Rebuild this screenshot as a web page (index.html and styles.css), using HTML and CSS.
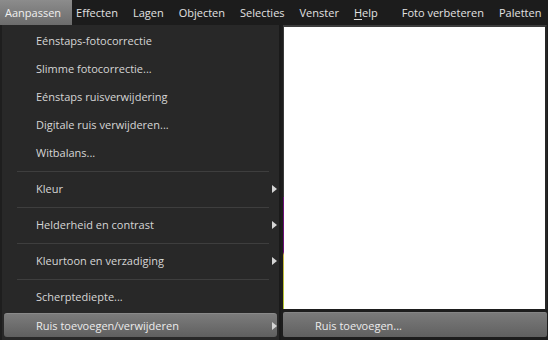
FILE: index.html
```html
<!DOCTYPE html>
<html>
<head>
<meta charset="utf-8">
<link rel="stylesheet" href="styles.css">
</head>
<body>
<div class="app">
  <nav class="menubar">
    <span class="mi active">Aanpassen</span>
    <span class="mi">Effecten</span>
    <span class="mi">Lagen</span>
    <span class="mi">Objecten</span>
    <span class="mi">Selecties</span>
    <span class="mi">Venster</span>
    <span class="mi"><u>H</u>elp</span>
    <span class="vsep"></span>
    <span class="mi">Foto verbeteren</span>
    <span class="mi">Paletten</span>
  </nav>
  <div class="body">
    <div class="dropdown">
      <div class="item">Eénstaps-fotocorrectie</div>
      <div class="item">Slimme fotocorrectie...</div>
      <div class="item">Eénstaps ruisverwijdering</div>
      <div class="item">Digitale ruis verwijderen...</div>
      <div class="item">Witbalans...</div>
      <div class="sep"></div>
      <div class="item sub">Kleur<span class="arrow"></span></div>
      <div class="sep"></div>
      <div class="item sub">Helderheid en contrast<span class="arrow"></span></div>
      <div class="sep"></div>
      <div class="item sub">Kleurtoon en verzadiging<span class="arrow"></span></div>
      <div class="sep"></div>
      <div class="item">Scherptediepte...</div>
      <div class="item sub hl"><span class="hlbox">Ruis toevoegen/verwijderen<span class="arrow"></span></span></div>
    </div>
    <div class="right">
      <div class="canvas"></div>
      <div class="submenu"><span class="subhl">Ruis toevoegen...</span></div>
    </div>
  </div>
</div>
</body>
</html>
```

FILE: styles.css
```css
html, body {
  margin: 0;
  padding: 0;
  background: #1b1b1b;
}
.app {
  width: 548px;
  height: 340px;
  overflow: hidden;
  font-family: "Open Sans", "Noto Sans", sans-serif;
  font-size: 11px;
  color: #dcdcdc;
}
.menubar {
  display: flex;
  align-items: center;
  height: 25px;
  background: #1c1c1c;
}
.mi {
  height: 25px;
  line-height: 25px;
  padding: 0 7.5px;
  color: #e2e2e2;
  white-space: nowrap;
}
.mi u {
  text-decoration: underline;
  text-underline-offset: 2px;
}
.mi.active {
  padding: 0 11px 0 5px;
  margin-right: -3.5px;
  background: linear-gradient(#8c8c8c, #6c6c6c);
  color: #f0f0f0;
  position: relative;
  z-index: 1;
}
.vsep {
  width: 1px;
  height: 17px;
  background: #454545;
  margin: 0 1.5px 0 7.5px;
}
.body {
  display: flex;
  height: 315px;
}
.dropdown {
  width: 277px;
  background: #282828;
  border-left: 2px solid #1e1e1e;
  border-right: 2px solid #1a1a1a;
  padding-top: 2px;
  box-sizing: content-box;
}
.item {
  position: relative;
  height: 28px;
  line-height: 28px;
  padding-left: 34px;
  color: #d6d6d6;
  white-space: nowrap;
}
.arrow {
  position: absolute;
  left: 270px;
  top: 10px;
  width: 0;
  height: 0;
  border-top: 4px solid transparent;
  border-bottom: 4px solid transparent;
  border-left: 5px solid #d4d4d4;
}
.sep {
  height: 1px;
  margin: 4px 10px 3px 15px;
  background: #3e3e3e;
}
.item.hl {
  padding: 2px 0 0 2px;
  height: 26px;
}
.hlbox {
  display: block;
  position: relative;
  height: 24px;
  width: 273px;
  line-height: 24px;
  padding-left: 32px;
  box-sizing: border-box;
  border-radius: 3px;
  border-top: 1px solid #8a8a8a;
  background: linear-gradient(#7c7c7c, #5f5f5f);
  color: #ececec;
}
.hlbox .arrow {
  left: 268px;
  top: 8px;
}
.right {
  flex: 1;
  display: flex;
  flex-direction: column;
  background: #1d1d1d;
  padding-left: 2px;
}
.canvas {
  height: 282px;
  margin-right: 1px;
  border-top: 2px solid #3c3c3c;
  border-right: 2px solid #262626;
  background-image: linear-gradient(to bottom, #3a3a3a 0, #3a3a3a 170px, #6a0f78 170px, #6a0f78 225px, #c8b840 228px, #b4c830 282px);
  background-size: 1px 100%;
  background-repeat: no-repeat;
  background-color: #ffffff;
}
.submenu {
  margin-top: 3px;
  height: 25px;
  padding-right: 1px;
}
.subhl {
  display: block;
  height: 25px;
  line-height: 25px;
  padding-left: 32px;
  border-radius: 2px;
  border-top: 1px solid #858585;
  box-sizing: border-box;
  background: linear-gradient(#7a7a7a, #606060);
  color: #ececec;
  white-space: nowrap;
}
```
